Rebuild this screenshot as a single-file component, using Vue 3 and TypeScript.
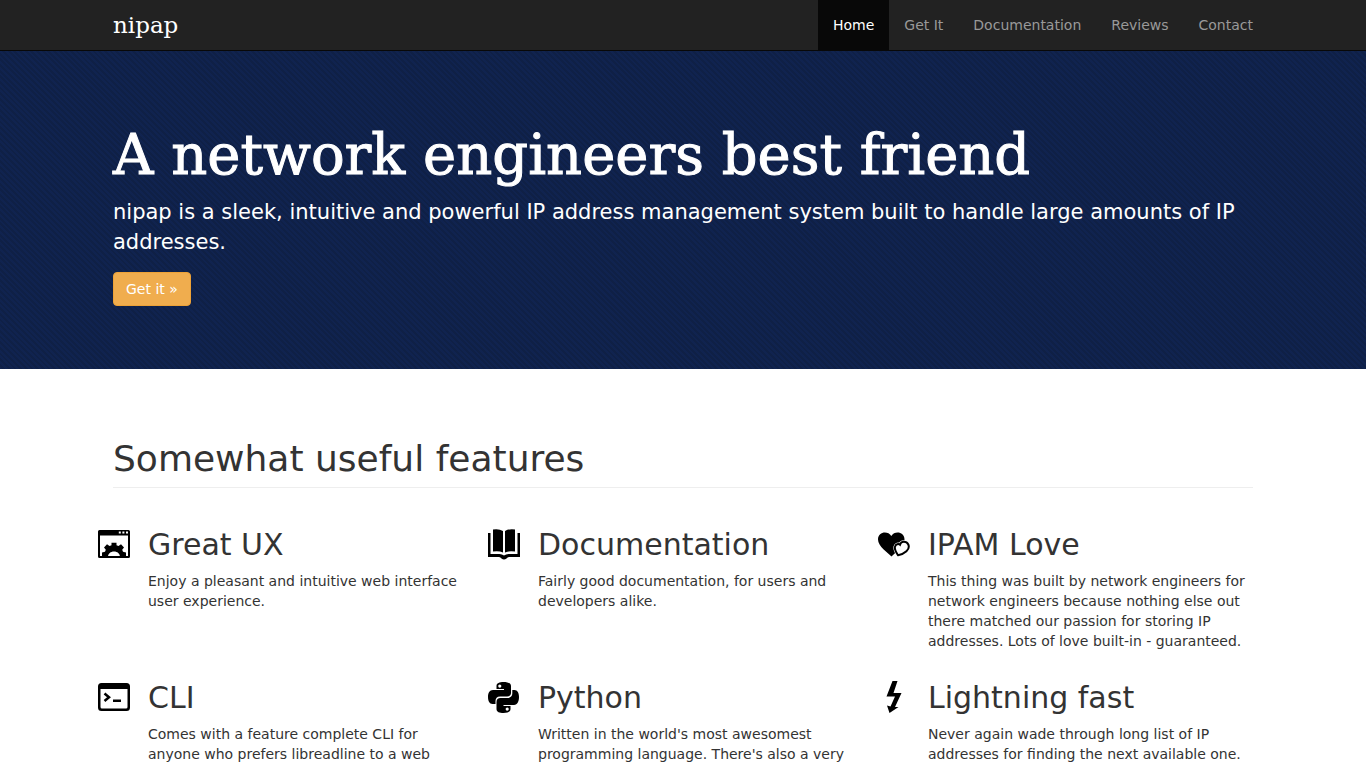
<script setup lang="ts">
interface NavItem {
  label: string
  active?: boolean
}

interface Feature {
  icon: 'window' | 'book' | 'hearts' | 'terminal' | 'python' | 'bolt'
  title: string
  text: string
}

const navItems: NavItem[] = [
  { label: 'Home', active: true },
  { label: 'Get It' },
  { label: 'Documentation' },
  { label: 'Reviews' },
  { label: 'Contact' },
]

const features: Feature[] = [
  { icon: 'window', title: 'Great UX', text: 'Enjoy a pleasant and intuitive web interface user experience.' },
  { icon: 'book', title: 'Documentation', text: 'Fairly good documentation, for users and developers alike.' },
  {
    icon: 'hearts',
    title: 'IPAM Love',
    text: 'This thing was built by network engineers for network engineers because nothing else out there matched our passion for storing IP addresses. Lots of love built-in - guaranteed.',
  },
  { icon: 'terminal', title: 'CLI', text: 'Comes with a feature complete CLI for anyone who prefers libreadline to a web' },
  { icon: 'python', title: 'Python', text: "Written in the world's most awesomest programming language. There's also a very" },
  { icon: 'bolt', title: 'Lightning fast', text: 'Never again wade through long list of IP addresses for finding the next available one.' },
]
</script>

<template>
  <div class="page">
    <header class="navbar">
      <div class="container navbar-inner">
        <a class="brand" href="#">nipap</a>
        <nav>
          <ul class="nav">
            <li v-for="item in navItems" :key="item.label">
              <a href="#" :class="{ active: item.active }">{{ item.label }}</a>
            </li>
          </ul>
        </nav>
      </div>
    </header>

    <section class="hero">
      <div class="container">
        <h1>A network engineers best friend</h1>
        <p>nipap is a sleek, intuitive and powerful IP address management system built to handle large amounts of IP addresses.</p>
        <a class="button" href="#">Get it »</a>
      </div>
    </section>

    <main class="container">
      <h2>Somewhat useful features</h2>
      <div class="features">
        <article v-for="feature in features" :key="feature.title" class="feature">
          <svg class="icon" viewBox="0 0 32 32" aria-hidden="true">
            <template v-if="feature.icon === 'window'">
              <path fill-rule="evenodd" d="M1.500 2H30.500Q32 2 32 3.500V28.500Q32 30 30.500 30H1.500Q0 30 0 28.500V3.500Q0 2 1.500 2ZM2 7.500V28H30V7.500ZM20.800 3.500V5.500H22.800V3.500ZM24.400 3.500V5.500H26.400V3.500ZM28 3.500V5.500H30V3.500Z" />
              <path d="M4 28.500V24.500L7 23.800 7.800 21.800 6 19.500 9 16.300 11.500 18 13.500 17.200V14.800H18.500V17.200L20.500 18 23 16.300 26 19.500 24.200 21.800 25 23.800 28 24.500V28.500H22C21.800 25.800 19.500 23.500 16 23.500S10.200 25.800 10 28.500Z" />
            </template>
            <template v-else-if="feature.icon === 'book'">
              <path d="M5 1.500Q11 .5 15 3V24.500Q11 22.500 5 23.500ZM27 1.500Q21 .5 17 3V24.500Q21 22.500 27 23.500Z" />
              <path d="M0 5H2.500V26H11.500Q14 26 16 27.500 18 26 20.500 26H29.500V5H32V29H21Q19.500 29 18.500 30.500 16 32.500 13.500 30.500 12.500 29 11 29H0Z" />
            </template>
            <template v-else-if="feature.icon === 'hearts'">
              <path d="M13.500 28.500C10 24.500 0 18.500 0 11.500C0 3.500 10 2.500 13.300 8C16.500 2.500 26.500 3.500 26.500 11.500C26.500 18.500 17 24.500 13.500 28.500Z" />
              <path class="small-heart-gap" d="M22 16.800C23 13 28.300 12.800 30.300 16.500C32.500 21.500 26.500 26.200 20 27.200C18.500 25 16.200 21.400 17 18.700C17.800 16 20.500 15.500 22 16.800Z" />
              <path class="small-heart" d="M22 16.800C23 13 28.300 12.800 30.300 16.500C32.500 21.500 26.500 26.200 20 27.200C18.500 25 16.200 21.400 17 18.700C17.800 16 20.500 15.500 22 16.800Z" />
            </template>
            <template v-else-if="feature.icon === 'terminal'">
              <path fill-rule="evenodd" d="M3.500 2H28.500Q32 2 32 5.500V26.500Q32 30 28.500 30H3.500Q0 30 0 26.500V5.500Q0 2 3.500 2ZM2.500 8V26Q2.500 27.500 4 27.500H28Q29.500 27.500 29.500 26V8Z" />
              <path d="M6.500 12.500L11 16.300 6.500 20" fill="none" stroke="currentColor" stroke-width="2.500" />
              <path d="M15 18.500H23V21H15Z" />
            </template>
            <template v-else-if="feature.icon === 'python'">
              <path fill-rule="evenodd" d="M8.500 5C8.500 2 11.500 1 15.500 1S23 2 23 5V12C23 14.300 21.300 15.500 19 15.500H12C9 15.500 7.500 17.500 7.500 20V23H4.500C1.500 23 0 20 0 16S1.500 9 5 9H16V8H8.500ZM11.800 3.500A1.600 1.600 0 1 0 11.800 6.700A1.600 1.600 0 1 0 11.800 3.500Z" />
              <path fill-rule="evenodd" d="M22.500 28C22.500 31 19.500 32 15.500 32S8.500 31 8.500 28V21C8.500 18.500 10 17 12.500 17H19.500C22.500 17 24.300 15 24.300 12.500V9H26.500C29.500 9 31 12 31 16S29.500 24 26 24H15.500V25H22.500ZM19.200 26.500A1.600 1.600 0 1 0 19.200 29.700A1.600 1.600 0 1 0 19.200 26.500Z" />
            </template>
            <path v-else d="M14.500 0H19.500L15.500 12H23.500L17 26 20.500 26 11.500 32 9 24.500 12.500 25.500 17 15.500H8.500Z" />
          </svg>
          <div>
            <h3>{{ feature.title }}</h3>
            <p>{{ feature.text }}</p>
          </div>
        </article>
      </div>
    </main>
  </div>
</template>

<style>
body {
  margin: 0;
  overflow: hidden;
}
</style>

<style scoped>
.page {
  height: 100vh;
  overflow: hidden;
  background: #fff;
  color: #333;
  font: 14px/20px "DejaVu Sans", sans-serif;
}

.container {
  box-sizing: border-box;
  max-width: 1170px;
  margin: 0 auto;
  padding: 0 15px;
}

.navbar {
  background: #222;
  border-bottom: 1px solid #080808;
}

.navbar-inner {
  display: flex;
  align-items: center;
  justify-content: space-between;
}

.brand {
  color: #fff;
  font: 23px/50px "DejaVu Serif", serif;
  text-decoration: none;
}

.nav {
  display: flex;
  margin: 0 -15px 0 0;
  padding: 0;
  list-style: none;
}

.nav a {
  display: block;
  padding: 15px;
  color: #999;
  text-decoration: none;
}

.nav a.active {
  background: #080808;
  color: #fff;
}

.hero {
  padding: 67px 0 63px;
  background: repeating-linear-gradient(45deg, #10234f 0 2px, #0f2046 2px 4px);
  color: #fff;
}

h1,
h2,
h3,
p {
  margin: 0;
  font-weight: 400;
}

h1 {
  margin-bottom: 6px;
  font: 56px/73px "DejaVu Serif", serif;
  -webkit-text-stroke: 1px #fff;
}

.hero p {
  margin-bottom: 15px;
  font-size: 21px;
  line-height: 30px;
}

.button {
  display: block;
  width: fit-content;
  padding: 6px 12px;
  border: 1px solid #eea236;
  border-radius: 4px;
  background: #f0ad4e;
  color: #fff;
  text-decoration: none;
}

h2 {
  margin: 70px 0 40px;
  padding-bottom: 9px;
  border-bottom: 1px solid #eee;
  font-size: 36px;
  line-height: 39px;
}

.features {
  display: grid;
  grid-template-columns: repeat(3, 1fr);
  row-gap: 30px;
  margin: 0 -15px;
}

.feature {
  display: flex;
  align-items: flex-start;
  gap: 18px;
  padding-right: 15px;
}

.icon {
  flex: none;
  width: 32px;
  height: 32px;
  color: #000;
  fill: currentColor;
}

.small-heart-gap {
  fill: #fff;
  stroke: #fff;
  stroke-width: 3px;
}

.small-heart {
  fill: #fff;
  stroke: currentColor;
  stroke-width: 2px;
}

h3 {
  margin-bottom: 10px;
  font-size: 30px;
  line-height: 33px;
}
</style>
